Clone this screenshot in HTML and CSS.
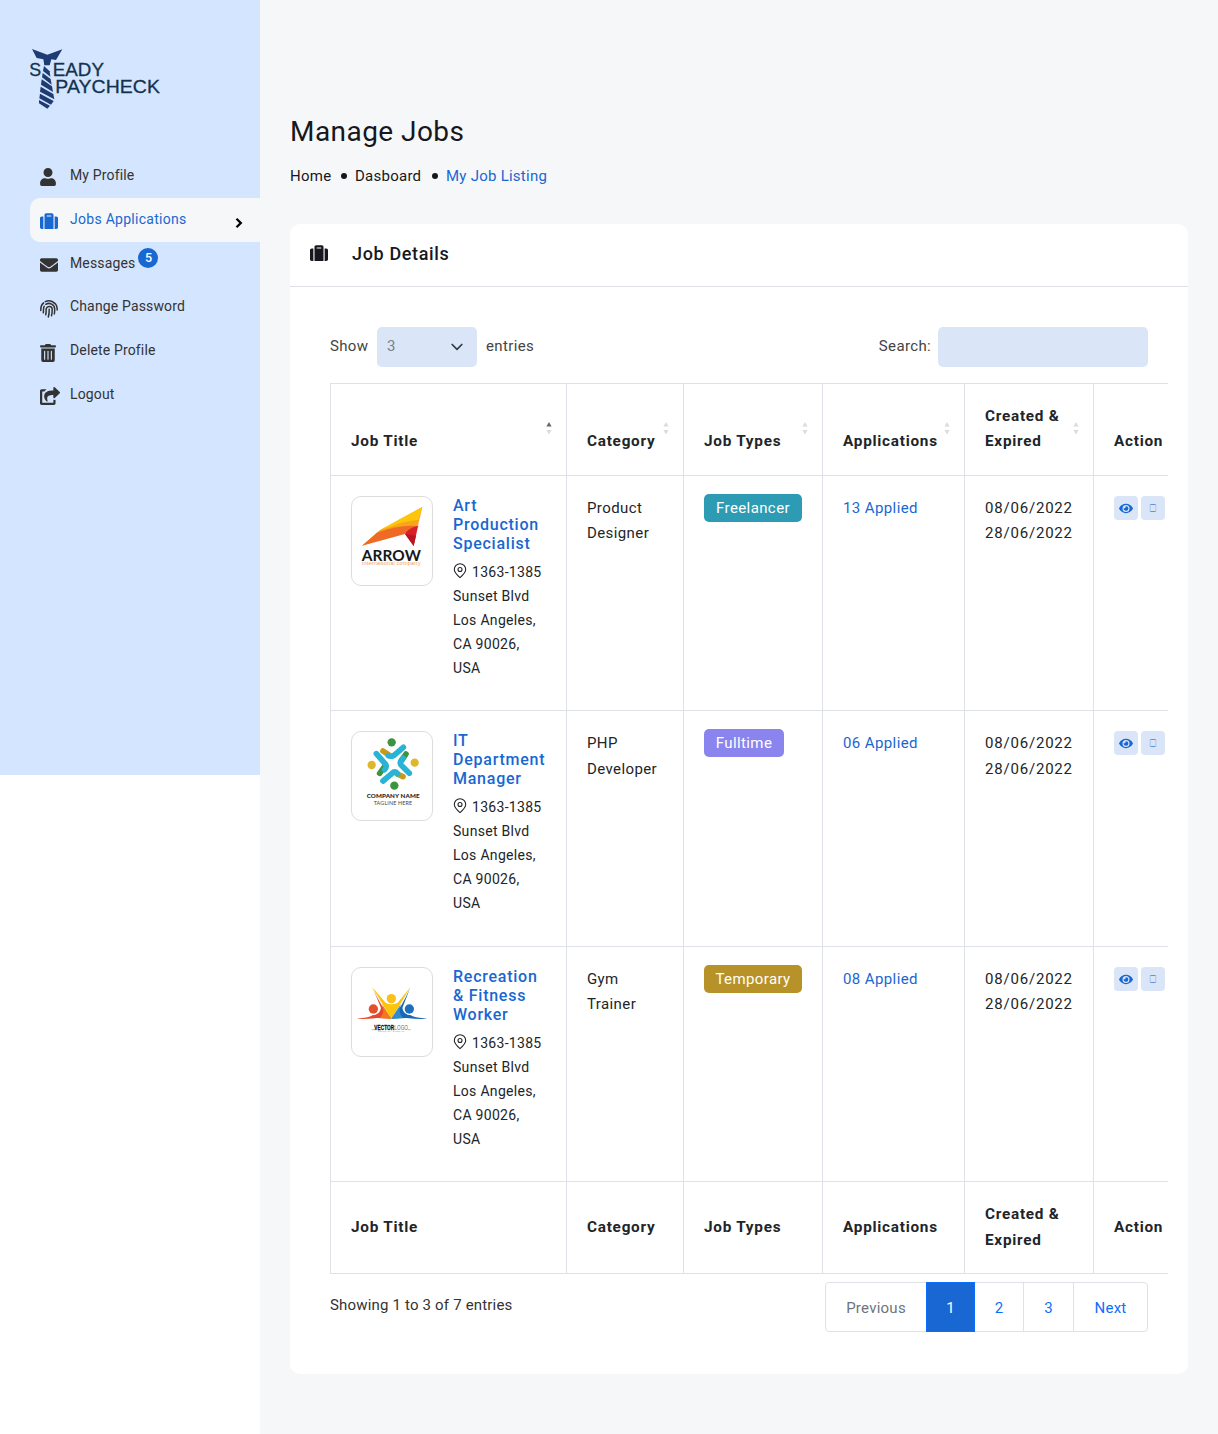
FILE: index.html
```html
<!DOCTYPE html>
<html lang="en">
<head>
<meta charset="utf-8">
<title>Manage Jobs</title>
<link rel="stylesheet" href="styles.css">
</head>
<body>
<svg class="sprite" width="0" height="0">
  <symbol id="i-case" viewBox="0 0 512 512"><path d="M128 480h256V80c0-26.5-21.5-48-48-48H176c-26.5 0-48 21.5-48 48v400zm64-384h128v32H192V96zm320 80v256c0 26.5-21.5 48-48 48h-48V128h48c26.5 0 48 21.5 48 48zM96 480H48c-26.5 0-48-21.5-48-48V176c0-26.5 21.5-48 48-48h48v352z"/></symbol>
  <symbol id="i-eye" viewBox="0 0 576 512"><path d="M572.52 241.4C518.29 135.59 410.93 64 288 64S57.68 135.64 3.48 241.41a32.35 32.35 0 0 0 0 29.19C57.71 376.41 165.07 448 288 448s230.32-71.64 284.52-177.41a32.35 32.35 0 0 0 0-29.19zM288 400a144 144 0 1 1 144-144 143.93 143.93 0 0 1-144 144zm0-240a95.31 95.31 0 0 0-25.31 3.79 47.85 47.85 0 0 1-66.9 66.9A95.78 95.78 0 1 0 288 160z"/></symbol>
  <symbol id="i-box" viewBox="0 0 8 10"><path d="M1 1.5h6M1 8.5h6" stroke="#5d93df" fill="none"/><path d="M1.2 1v8M6.8 1v8" stroke="#a9c6f0" fill="none"/></symbol>
  <symbol id="i-pin" viewBox="0 0 14 16"><path d="M7 14.6C3.300 11.400 1.300 9 1.300 6.500a5.700 5.700 0 0 1 11.400 0C12.700 9 10.700 11.400 7 14.600z" fill="none" stroke="currentColor" stroke-width="1.1"/><circle cx="7" cy="6.500" r="2" fill="none" stroke="currentColor" stroke-width="1.1"/></symbol>
  <symbol id="i-sort" viewBox="0 0 6 14"><path class="up" d="M3 1l2.600 4.400H.4z"/><path class="down" d="M3 13.400L.4 9h5.200z"/></symbol>
</svg>
<div class="page">
  <aside class="sidebar">
    <svg class="brand" viewBox="30 24 390 186" width="130" height="62">
      <g fill="#1f3b73">
        <path d="M36 27L82 44L127 28L108 60L94 58L89 76H73L70 58L50 54z"/>
        <path d="M72 78L89 94L91 110L69 93z"/><path d="M68 99L92 117L95 134L66 112z"/><path d="M65 118L96 139L99 156L63 134z"/><path d="M62 140L100 162L103 178L60 155z"/><path d="M60 161L101 183L93 194L58 175z"/><path d="M57 180L90 197L82 206L57 190z"/>
      </g>
      <g fill="#14324f" stroke="#14324f" stroke-width=".9" font-family="Liberation Sans, Arial, sans-serif" font-size="57">
        <text x="28" y="109" textLength="36" lengthAdjust="spacingAndGlyphs">S</text>
        <text x="98" y="109" textLength="154" lengthAdjust="spacingAndGlyphs">EADY</text>
        <text x="106" y="160" textLength="314" lengthAdjust="spacingAndGlyphs">PAYCHECK</text>
      </g>
    </svg>
    <nav class="menu">
      <a class="item"><svg class="icon" viewBox="0 0 448 512" width="16" height="18"><path d="M224 256c70.7 0 128-57.3 128-128S294.7 0 224 0 96 57.3 96 128s57.3 128 128 128zm89.6 32h-16.7c-22.2 10.2-46.9 16-72.9 16s-50.6-5.8-72.9-16h-16.7C60.2 288 0 348.2 0 422.4V464c0 26.5 21.5 48 48 48h352c26.500 0 48-21.500 48-48v-41.600c0-74.200-60.200-134.400-134.400-134.400z"/></svg><span>My Profile</span></a>
      <a class="item active"><svg class="icon" width="18" height="18"><use href="#i-case"/></svg><span>Jobs Applications</span><svg class="arrow" viewBox="0 0 8 12" width="8" height="12"><path d="M1.500 1.700L5.800 6L1.500 10.300" fill="none" stroke="#000" stroke-width="2.300"/></svg></a>
      <a class="item"><svg class="icon" viewBox="0 0 512 512" width="18" height="18"><path d="M502.3 190.8c3.9-3.1 9.7-.2 9.7 4.7V400c0 26.5-21.5 48-48 48H48c-26.5 0-48-21.5-48-48V195.6c0-5 5.7-7.8 9.7-4.7 22.4 17.4 52.1 39.5 154.1 113.6 21.1 15.4 56.7 47.8 92.2 47.6 35.7.3 72-32.8 92.3-47.6 102-74.1 131.6-96.3 154-113.7zM256 320c23.2.4 56.6-29.2 73.4-41.4 132.7-96.3 142.8-104.7 173.4-128.7 5.8-4.5 9.2-11.5 9.2-18.9v-19c0-26.5-21.5-48-48-48H48c-26.5 0-48 21.5-48 48v19c0 7.4 3.4 14.3 9.2 18.9 30.6 23.9 40.7 32.4 173.4 128.7 16.8 12.2 50.2 41.8 73.4 41.4z"/></svg><span>Messages</span><b class="count">5</b></a>
      <a class="item"><svg class="icon" viewBox="0 0 18 18" width="18" height="18"><g fill="none" stroke="currentColor" stroke-width="1.500" stroke-linecap="round"><path d="M.8 10.500V9C.8 6.500 2 4.200 3.600 2.900M5.300 1.700C10 -.6 16 2.200 17 7.500l.2 2.500"/><path d="M3.300 12.800C3.800 9.500 3 8.300 4.200 6.200M5.800 4.300C9.500 2 14.700 4.500 14.700 9.200c0 2-.1 3.300-.4 4.700"/><path d="M5.700 14.800C6.600 11.600 5.900 10 6.200 8.700c.9-3.200 5.900-2.700 6 .6 0 2.500-.1 4.500-.7 6.500"/><path d="M9.200 9.300c.1 3-.1 5.300-.9 7.700"/></g></svg><span>Change Password</span></a>
      <a class="item"><svg class="icon" viewBox="0 0 448 512" width="16" height="18"><path d="M32 464a48 48 0 0 0 48 48h288a48 48 0 0 0 48-48V128H32zm272-256a16 16 0 0 1 32 0v224a16 16 0 0 1-32 0zm-96 0a16 16 0 0 1 32 0v224a16 16 0 0 1-32 0zm-96 0a16 16 0 0 1 32 0v224a16 16 0 0 1-32 0zM432 32H312l-9.4-18.7A24 24 0 0 0 281.1 0H166.8a23.72 23.72 0 0 0-21.4 13.3L136 32H16A16 16 0 0 0 0 48v32a16 16 0 0 0 16 16h416a16 16 0 0 0 16-16V48a16 16 0 0 0-16-16z"/></svg><span>Delete Profile</span></a>
      <a class="item"><svg class="icon" viewBox="0 0 576 512" width="20" height="18"><path d="M568.482 177.448L424.479 313.433C409.3 327.768 384 317.14 384 295.985v-71.963c-144.575.97-205.566 35.113-164.775 171.353 4.483 14.973-12.846 26.567-25.006 17.33C155.252 383.105 120 326.488 120 269.339c0-143.937 117.599-172.5 264-173.312V24.012c0-21.174 25.317-31.768 40.479-17.448l144.003 135.988c10.02 9.463 10.028 25.425 0 34.896zM384 379.128V448H64V128h50.916a11.99 11.99 0 0 0 8.648-3.693c14.953-15.568 32.237-27.89 51.014-37.676C185.708 80.83 181.584 64 169.033 64H48C21.49 64 0 85.49 0 112v352c0 26.51 21.49 48 48 48h352c26.51 0 48-21.49 48-48v-88.806c0-8.288-8.197-14.066-16.011-11.302a71.83 71.83 0 0 1-34.189 3.377c-7.27-1.046-13.8 4.514-13.8 11.859z"/></svg><span>Logout</span></a>
    </nav>
  </aside>
  <main class="main">
    <h1 class="title">Manage Jobs</h1>
    <div class="crumbs"><span class="c-home">Home</span><i class="dot"></i><span class="c-dash">Dasboard</span><i class="dot"></i><span class="here">My Job Listing</span></div>
    <section class="card">
      <header class="card-head"><svg width="18" height="18"><use href="#i-case"/></svg><h2>Job Details</h2></header>
      <div class="card-body">
        <div class="controls">
          <span class="show">Show</span>
          <div class="select"><span>3</span><svg viewBox="0 0 12 8" width="12" height="8"><path d="M1.200 1.500L6 6.300L10.800 1.500" fill="none" stroke="#343a40" stroke-width="1.700" stroke-linecap="round" stroke-linejoin="round"/></svg></div>
          <span class="entries">entries</span>
          <label class="search"><span>Search:</span><input type="text"></label>
        </div>
        <div class="scroll">
          <table class="jobs">
            <colgroup><col class="w1"><col class="w2"><col class="w3"><col class="w4"><col class="w5"><col class="w6"></colgroup>
            <thead><tr>
              <th>Job Title<svg class="sort asc"><use href="#i-sort"/></svg></th>
              <th>Category<svg class="sort"><use href="#i-sort"/></svg></th>
              <th>Job Types<svg class="sort"><use href="#i-sort"/></svg></th>
              <th>Applications<svg class="sort"><use href="#i-sort"/></svg></th>
              <th>Created &amp;<br>Expired<svg class="sort"><use href="#i-sort"/></svg></th>
              <th>Action</th>
            </tr></thead>
            <tbody>
              <tr class="r1">
                <td><div class="job"><div class="logo"><svg viewBox="34 34 246 270" width="82" height="90">
                  <path d="M67 183L120 137L248 67L234 124L196 134z" fill="#f9a51a"/><path d="M120 137L248 67L236 105Q180 112 160 124z" fill="#fdc60b"/><path d="M67 183L112 144Q180 118 238 124L196 148z" fill="#ee6a25"/><path d="M248 67L222 184L196 148Q208 128 235 124z" fill="#d9202a"/><path d="M196 148L222 184L229 153z" fill="#b8161f"/>
                  <text x="66" y="228" textLength="178" lengthAdjust="spacingAndGlyphs" font-family="Lato, sans-serif" font-weight="700" font-size="48" fill="#17181b">ARROW</text>
                  <text x="67" y="241" textLength="176" lengthAdjust="spacingAndGlyphs" font-family="Liberation Sans, sans-serif" font-size="15" fill="#f3a45f">international company</text></svg></div>
                  <div class="info"><h4>Art<br>Production<br>Specialist</h4><p><svg class="pin"><use href="#i-pin"/></svg>1363-1385<br>Sunset Blvd<br>Los Angeles,<br>CA 90026,<br>USA</p></div></div></td>
                <td>Product<br>Designer</td>
                <td><span class="tag teal">Freelancer</span></td>
                <td class="link">13 Applied</td>
                <td class="date">08/06/2022<br>28/06/2022</td>
                <td><div class="acts"><span><svg width="14" height="13"><use href="#i-eye"/></svg></span><span><svg width="8" height="10"><use href="#i-box"/></svg></span></div></td>
              </tr>
              <tr class="r2">
                <td><div class="job"><div class="logo"><svg viewBox="34 34 246 270" width="82" height="90">
                  <g stroke-linecap="round" stroke-width="17" fill="none"><path d="M130 94L146 105" stroke="#c89a19"/><path d="M199 103L186 122" stroke="#3c9440"/><path d="M120 161L134 142" stroke="#3c9440"/><path d="M190 171L172 163" stroke="#c89a19"/>
                  <path d="M191 83L163 107Q152 112 146 108M110 102L138 134Q142 142 135 150M130 184L157 161Q166 152 174 162M209 161L184 136Q178 128 190 116" stroke="#29b3d5"/></g>
                  <g fill="#3c9440"><circle cx="156" cy="68" r="12.500"/><circle cx="164" cy="198" r="12.500"/></g><g fill="#dfb72a"><circle cx="96" cy="136" r="12.500"/><circle cx="225" cy="129" r="12.500"/></g>
                  <text x="81" y="236" textLength="159" lengthAdjust="spacingAndGlyphs" font-family="Lato, sans-serif" font-weight="900" font-size="19" fill="#222">COMPANY NAME</text>
                  <text x="102" y="256" textLength="116" lengthAdjust="spacingAndGlyphs" font-family="Lato, sans-serif" font-size="14" fill="#444">TAGLINE HERE</text></svg></div>
                  <div class="info"><h4>IT<br>Department<br>Manager</h4><p><svg class="pin"><use href="#i-pin"/></svg>1363-1385<br>Sunset Blvd<br>Los Angeles,<br>CA 90026,<br>USA</p></div></div></td>
                <td>PHP<br>Developer</td>
                <td><span class="tag violet">Fulltime</span></td>
                <td class="link">06 Applied</td>
                <td class="date">08/06/2022<br>28/06/2022</td>
                <td><div class="acts"><span><svg width="14" height="13"><use href="#i-eye"/></svg></span><span><svg width="8" height="10"><use href="#i-box"/></svg></span></div></td>
              </tr>
              <tr class="r3">
                <td><div class="job"><div class="logo"><svg viewBox="34 37 246 270" width="82" height="90">
                  <path d="M98 98Q126 160 155 192L112 190Q70 194 52 192Q92 188 98 182Q120 182 124 160Q112 130 98 98z" fill="#e5482a"/><path d="M212 98Q186 160 155 192L200 190Q240 194 262 192Q220 188 214 182Q192 182 188 160Q200 130 212 98z" fill="#1868b5"/><path d="M98 98L138 144Q155 154 174 144L212 98L155 193z" fill="#fcc40f"/><path d="M126 147L155 192L120 190Q138 172 126 147z" fill="#f0781d"/><path d="M184 147L155 192L190 190Q173 172 184 147z" fill="#2e8bd0"/>
                  <circle cx="155" cy="132" r="14" fill="#fcbf17"/><circle cx="101" cy="163" r="14" fill="#e4502c"/><circle cx="209" cy="163" r="14" fill="#1b6fbb"/>
                  <g font-family="Liberation Sans, sans-serif"><text x="104" y="225" textLength="60" lengthAdjust="spacingAndGlyphs" font-weight="700" font-size="20" fill="#111" stroke="#111" stroke-width=".8">VECTOR</text><text x="164" y="225" textLength="41" lengthAdjust="spacingAndGlyphs" font-size="20" fill="#666">LOGO</text><text x="114" y="232" textLength="80" lengthAdjust="spacingAndGlyphs" font-size="6" fill="#999">COMPANY SLOGAN</text></g><path d="M96 225h10M204 225h9" stroke="#999" stroke-width="2"/></svg></div>
                  <div class="info"><h4>Recreation<br>&amp; Fitness<br>Worker</h4><p><svg class="pin"><use href="#i-pin"/></svg>1363-1385<br>Sunset Blvd<br>Los Angeles,<br>CA 90026,<br>USA</p></div></div></td>
                <td>Gym<br>Trainer</td>
                <td><span class="tag gold">Temporary</span></td>
                <td class="link">08 Applied</td>
                <td class="date">08/06/2022<br>28/06/2022</td>
                <td><div class="acts"><span><svg width="14" height="13"><use href="#i-eye"/></svg></span><span><svg width="8" height="10"><use href="#i-box"/></svg></span></div></td>
              </tr>
            </tbody>
            <tfoot><tr><th>Job Title</th><th>Category</th><th>Job Types</th><th>Applications</th><th>Created &amp;<br>Expired</th><th>Action</th></tr></tfoot>
          </table>
        </div>
        <div class="bottom">
          <span class="summary">Showing 1 to 3 of 7 entries</span>
          <div class="pager"><a class="p-prev">Previous</a><a class="p-on">1</a><a class="p-two">2</a><a class="p-three">3</a><a class="p-next">Next</a></div>
        </div>
      </div>
    </section>
  </main>
</div>
</body>
</html>
```
FILE: styles.css
```css
* { box-sizing: border-box; }
body { margin: 0; background: #fff; font: 15px/25.5px Roboto, "Open Sans", sans-serif; letter-spacing: .25px; color: #212529; }
h1, h2, h4, p { margin: 0; }
svg { fill: currentColor; display: block; }
.sprite { position: absolute; }
.page { display: flex; align-items: flex-start; height: 1434px; overflow: hidden; }

.sidebar { width: 260px; height: 775px; flex: none; background: #d3e5ff; padding: 48px 0 0 30px; }
.menu { margin-top: 44px; }
.item { display: flex; align-items: center; height: 43.8px; padding-left: 10px; font-size: 14px; line-height: 23.8px; letter-spacing: .15px; color: #333; }
.active.item { letter-spacing: .28px; }
.icon { margin: 3px 0 0; flex: none; }
.icon[width="16"] { margin-right: 14px; }
.icon[width="18"] { margin-right: 12px; }
.icon[width="20"] { margin-right: 10px; }
.active { background: #f6f7f9; border-radius: 10px 0 0 10px; color: #1967d2; }
.item.active { color: #1967d2; }
.arrow { margin: 6px 17px 0 auto; }
.count { width: 20px; height: 20px; margin: -11px 0 0 3px; border-radius: 50%; background: #1967d2; color: #fff; font-size: 12.5px; font-weight: 500; line-height: 20px; letter-spacing: 0; text-align: center; }

.main { flex: 1; min-width: 0; height: 1434px; padding: 115px 30px 0; background: #f6f7f9; }
.title { font-size: 28px; line-height: 34px; font-weight: 400; letter-spacing: .45px; color: #17171d; }
.crumbs { display: flex; align-items: center; height: 26px; margin-top: 14px; color: #17171d; }
.crumbs span { padding-top: 2px; }
.dot { width: 6px; height: 6px; border-radius: 50%; background: #17171d; margin-right: 8px; }
.c-home { width: 51px; }
.c-dash { width: 77px; }
.crumbs .here, .link { color: #1967d2; }

.card { margin-top: 35px; height: 1150px; background: #fff; border-radius: 10px; }
.card-head { display: flex; align-items: center; height: 63px; padding: 0 20px 4px; border-bottom: 1px solid #dee2e6; color: #17171d; }
.card-head h2 { margin-left: 24px; padding-top: 2px; font-size: 18px; font-weight: 500; line-height: 24px; letter-spacing: .65px; }
.card-body { padding: 40px 20px 0 40px; }
.controls { display: flex; align-items: center; height: 40px; margin-right: 20px; letter-spacing: .35px; color: #444; }
.show { width: 47px; }
.select { display: flex; align-items: center; justify-content: space-between; width: 100px; height: 40px; padding: 0 14px 0 10px; border-radius: 5px; background: #dae6f7; color: #7b8188; }
.entries { margin-left: 9px; }
.search { display: flex; align-items: center; gap: 7px; margin-left: auto; }
.search input { width: 210px; height: 40px; border: 0; border-radius: 5px; background: #dae6f7; }

.scroll { margin-top: 16px; overflow: hidden; }
.jobs { width: 860px; table-layout: fixed; border-collapse: separate; border-spacing: 0; border: solid #dee2e6; border-width: 1px 0 0 1px; }
.w1 { width: 236px; } .w2 { width: 117px; } .w3 { width: 139px; } .w4 { width: 142px; } .w5 { width: 129px; } .w6 { width: 96px; }
.jobs th, .jobs td { padding: 20px 0 0 20px; border: solid #dee2e6; border-width: 0 1px 1px 0; text-align: left; vertical-align: top; }
.jobs td { letter-spacing: .4px; }
.jobs th { position: relative; height: 92px; padding: 20px 0 21px 20px; vertical-align: bottom; font-size: 15.3px; font-weight: 700; line-height: 25px; letter-spacing: .75px; color: #212529; }
.jobs tfoot th { padding-bottom: 20px; line-height: 25.5px; vertical-align: middle; }
.r1, .r3 { height: 235px; line-height: 25px; }
.r2 { height: 236px; }
.sort { --up: #dcdcdc; position: absolute; right: 14px; top: 37px; width: 6px; height: 14px; }
.asc { --up: #666; }
.up { fill: var(--up); }
.down { fill: #dcdcdc; }
.job { display: flex; gap: 20px; }
.logo { width: 82px; height: 90px; flex: none; border: 1px solid #ddd; border-radius: 10px; }
.logo svg { margin: -1px; }
.info h4 { font-size: 16px; line-height: 19.2px; font-weight: 500; letter-spacing: .75px; color: #1967d2; white-space: nowrap; }
.info p { margin-top: 7.8px; font-size: 14px; line-height: 23.8px; letter-spacing: .3px; white-space: nowrap; }
.pin { display: inline-block; width: 14px; height: 16px; margin-right: 5px; vertical-align: -2px; }
.tag { display: block; width: 98px; height: 28px; margin-top: -2px; border-radius: 5px; color: #fff; line-height: 28px; letter-spacing: .4px; text-align: center; }
.teal { background: #2c9bb3; }
.violet { width: 80px; background: #8a85ee; }
.gold { background: #b69229; }
.jobs .date { letter-spacing: .8px; }
.acts { display: flex; gap: 3px; }
.acts span { display: flex; align-items: center; justify-content: center; width: 24px; height: 24px; border-radius: 4px; background: #dae6f7; color: #1967d2; }

.bottom { display: flex; justify-content: space-between; margin: 8px 20px 0 0; }
.summary { padding-top: 11px; letter-spacing: .18px; color: #333; }
.pager { display: flex; width: 323px; height: 50px; border: 1px solid #dee2e6; border-radius: 4px; line-height: 50px; text-align: center; color: #0d6efd; }
.pager a { border-right: 1px solid #dee2e6; height: 48px; }
.pager .p-prev { width: 100px; border: 0; color: #6c757d; }
.pager .p-on { width: 49px; height: 50px; margin: -1px 0; border: 1px solid #0d6efd; background: #1967d2; color: #fff; }
.pager .p-two { width: 49px; }
.pager .p-three { width: 50px; }
.pager .p-next { flex: 1; border: 0; }
```
